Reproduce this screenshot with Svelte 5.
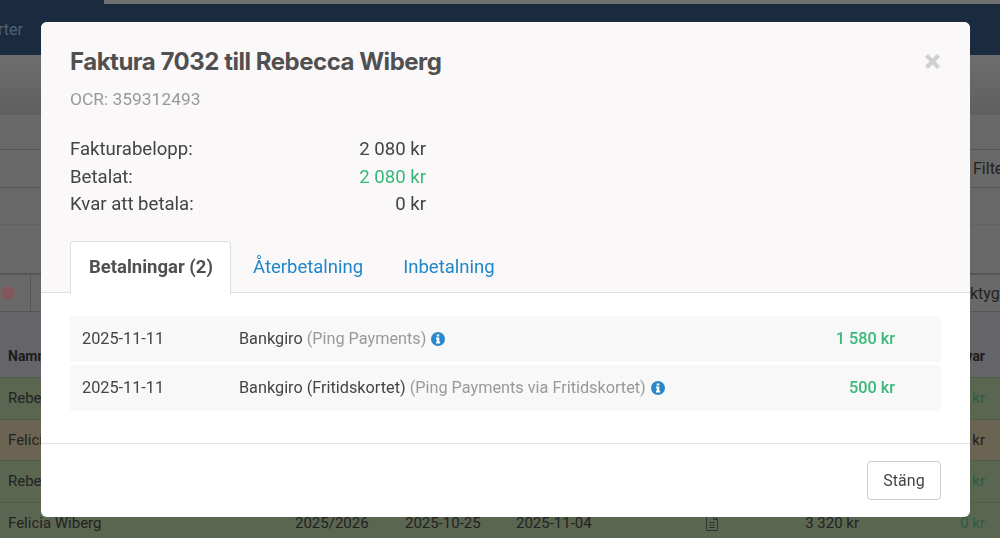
<script>
  // only the last row sticks out below the modal, the others just need name and balance
  const rows = [
    { name: 'Rebecka Wiberg', left: '0 kr', tone: 'paid' },
    { name: 'Felicia Wiberg', left: '0 kr', tone: 'part' },
    { name: 'Rebecka Wiberg', left: '0 kr', tone: 'paid' },
    { name: 'Felicia Wiberg', season: '2025/2026', date: '2025-10-25', due: '2025-11-04', sum: '3 320 kr', left: '0 kr', tone: 'paid' }
  ];

  const payments = [
    { date: '2025-11-11', method: 'Bankgiro', via: '(Ping Payments)', amount: '1 580 kr' },
    { date: '2025-11-11', method: 'Bankgiro (Fritidskortet)', via: '(Ping Payments via Fritidskortet)', amount: '500 kr' }
  ];
</script>

<div class="page">
  <div class="navbar">
    <div class="navbar-strip"></div>
    <div class="navbar-item"><span>rter</span></div>
  </div>
  <div class="page-head"></div>
  <div class="band h35"></div>
  <div class="band h38 filter"><span>Filter</span></div>
  <div class="band h37 faint"></div>
  <div class="band h49"></div>
  <div class="band h38 toolbar">
    <div class="dot-cell"><span class="dot"></span></div>
    <span class="tools">ktyg</span>
  </div>
  <div class="list-head">
    <span>Namn</span>
    <span class="end">var</span>
  </div>
  {#each rows as row}
    <div class="list-row {row.tone}">
      <span class="c-name">{row.name}</span>
      <span>{row.season ?? ''}</span>
      <span>{row.date ?? ''}</span>
      <span>{row.due ?? ''}</span>
      <span class="c-file">
        {#if row.sum}
          <svg width="14" height="16" viewBox="0 0 14 16">
            <path d="M1.5 .5h7l4 4v11h-11z M8.5 .5v4h4 M4 7.5h6 M4 10h6 M4 12.5h6" fill="none" stroke="#333" stroke-width="1" />
          </svg>
        {/if}
      </span>
      <span class="c-sum">{row.sum ?? ''}</span>
      <span class="c-left">{row.left}</span>
    </div>
  {/each}
</div>

<div class="modal">
  <div class="modal-top">
    <div class="title-row">
      <h2>Faktura 7032 till Rebecca Wiberg</h2>
      <svg class="close" width="17" height="17" viewBox="0 0 17 17">
        <path d="M2.5 2.5l12 12M14.5 2.5l-12 12" stroke="#cfcfcf" stroke-width="4.2" fill="none" />
      </svg>
    </div>
    <div class="ocr">OCR: 359312493</div>
    <div class="totals">
      <span>Fakturabelopp:</span><span class="val">2 080 kr</span>
      <span>Betalat:</span><span class="val green">2 080 kr</span>
      <span>Kvar att betala:</span><span class="val">0 kr</span>
    </div>
    <div class="tabs">
      <div class="tab active">Betalningar (2)</div>
      <div class="tab">Återbetalning</div>
      <div class="tab">Inbetalning</div>
    </div>
  </div>

  <div class="modal-body">
    {#each payments as p}
      <div class="pay-row">
        <span class="pay-date">{p.date}</span>
        <span class="pay-text">
          {p.method} <span class="muted">{p.via}</span>
          <svg class="info" width="14" height="14" viewBox="0 0 14 14">
            <circle cx="7" cy="7" r="7" fill="#2a87c9" />
            <path d="M5.7 2.4h2.6v2h-2.6z M5 5.4h3.3v4.3h.8v1.9H5V9.7h.8V7.3H5z" fill="#fff" />
          </svg>
        </span>
        <span class="pay-amount">{p.amount}</span>
      </div>
    {/each}
  </div>

  <div class="modal-foot">
    <button type="button">Stäng</button>
  </div>
</div>

<style>
  :global(body) {
    margin: 0;
    overflow: hidden;
    font-family: Roboto, "Liberation Sans", sans-serif;
  }

  /* colours below are already dimmed, as seen through the modal backdrop */
  .page {
    height: 538px;
    overflow: hidden;
    background: #696969;
    color: #222;
    font-size: 16px;
  }

  .navbar {
    height: 55px;
    background: #1a2b3f;
  }
  .navbar-strip {
    height: 4px;
    margin-left: 104px;
    background: #707070;
  }
  .navbar-item {
    width: 23px;
    height: 51px;
    display: flex;
    justify-content: flex-end;
    align-items: center;
    color: #4f6275;
  }

  .page-head {
    height: 60px;
    background: linear-gradient(#6e6e6e, #5f5f5f);
  }
  .band {
    box-sizing: border-box;
    border-bottom: 1px solid #565656;
    overflow: hidden;
    white-space: nowrap;
  }
  .h35 { height: 35px; }
  .h38 { height: 38px; }
  .h37 { height: 37px; }
  .h49 { height: 49px; }
  .faint { border-bottom-color: #636363; }
  .filter {
    display: flex;
    align-items: center;
    padding-left: 973px;
  }
  .toolbar {
    display: flex;
    align-items: center;
    border-top: 1px solid #565656;
  }
  .dot-cell {
    width: 31px;
    height: 100%;
    display: flex;
    align-items: center;
    padding-left: 1px;
    box-sizing: border-box;
    border-right: 1px solid #565656;
  }
  .dot {
    width: 14px;
    height: 14px;
    border-radius: 50%;
    background: #80585c;
  }
  .tools {
    margin-left: 939px;
  }

  .list-head {
    height: 65px;
    box-sizing: border-box;
    padding: 36px 15px 0 8px;
    display: flex;
    justify-content: space-between;
    background: #656468;
    font-size: 14px;
    font-weight: 700;
    color: #1c1c1c;
  }
  .list-row {
    height: 41.5px;
    box-sizing: border-box;
    display: grid;
    grid-template-columns: 287px 110px 111px 189px 60px 94px 126px;
    align-items: center;
    padding-left: 8px;
    font-size: 15px;
    white-space: nowrap;
    border-top: 1px solid #535d4b;
  }
  .paid { background: #5b6651; }
  .part { background: #6b6452; }
  .c-file {
    display: flex;
  }
  .c-sum {
    text-align: right;
  }
  .c-left {
    text-align: right;
    color: #2c5c3e;
  }
  .part .c-left { color: #1c1c1c; }

  .modal {
    position: fixed;
    left: 41px;
    top: 22px;
    width: 929px;
    height: 495px;
    box-sizing: border-box;
    display: flex;
    flex-direction: column;
    background: #fff;
    border-radius: 6px;
    overflow: hidden;
    color: #444;
  }

  .modal-top {
    height: 271px;
    box-sizing: border-box;
    padding: 25px 0 0 29px;
    background: #faf8f9;
    border-bottom: 1px solid #ddd;
  }
  .title-row {
    display: flex;
    justify-content: space-between;
    align-items: center;
    padding-right: 29px;
  }
  .close {
    margin-top: -1px;
  }
  h2 {
    margin: 0;
    font-family: Inter, "Liberation Sans", sans-serif;
    font-size: 24px;
    line-height: 30px;
    font-weight: 700;
    letter-spacing: -0.48px;
    color: #505050;
  }
  .ocr {
    margin-top: 12px;
    font-size: 17.4px;
    line-height: 20px;
    color: #999;
  }
  .totals {
    margin-top: 27px;
    width: 356px;
    display: grid;
    grid-template-columns: 1fr auto;
    font-size: 18.6px;
    line-height: 27.5px;
  }
  .val { text-align: right; }
  .green { color: #39b878; }

  .tabs {
    margin-top: 22px;
    display: flex;
    height: 52px;
    font-size: 18.5px;
  }
  .tab {
    padding: 14px 19px 0 21px;
    color: #1f87c9;
    border: 1px solid transparent;
    border-bottom: 0;
    margin-right: -2px;
  }
  .tab.active {
    width: 161px;
    box-sizing: border-box;
    padding: 14px 0 0 18px;
    margin-right: 0;
    background: #fff;
    color: #505050;
    font-weight: 700;
    border-color: #ddd;
    border-radius: 4px 4px 0 0;
    height: 53px;
  }

  .modal-body {
    flex: 1;
    padding: 23px 29px 0 29px;
    display: flex;
    flex-direction: column;
    gap: 3px;
  }
  .pay-row {
    height: 46px;
    box-sizing: border-box;
    display: flex;
    align-items: center;
    padding: 0 46px 1px 12px;
    background: #f8f8f8;
    border-radius: 3px;
    font-size: 16.25px;
  }
  .pay-date { width: 157px; }
  .pay-text {
    flex: 1;
    display: flex;
    align-items: center;
    gap: 4px;
  }
  .muted { color: #999; }
  .info { margin-left: 1px; }
  .pay-amount {
    font-weight: 500;
    color: #39b878;
  }

  .modal-foot {
    height: 74px;
    box-sizing: border-box;
    padding: 17px 29px 0 0;
    border-top: 1px solid #e5e5e5;
    display: flex;
    justify-content: flex-end;
    align-items: flex-start;
  }
  button {
    width: 74px;
    height: 39px;
    background: #fff;
    border: 1px solid #ccc;
    border-radius: 4px;
    font: 400 16px Roboto, "Liberation Sans", sans-serif;
    color: #444;
    padding: 0;
  }
</style>
